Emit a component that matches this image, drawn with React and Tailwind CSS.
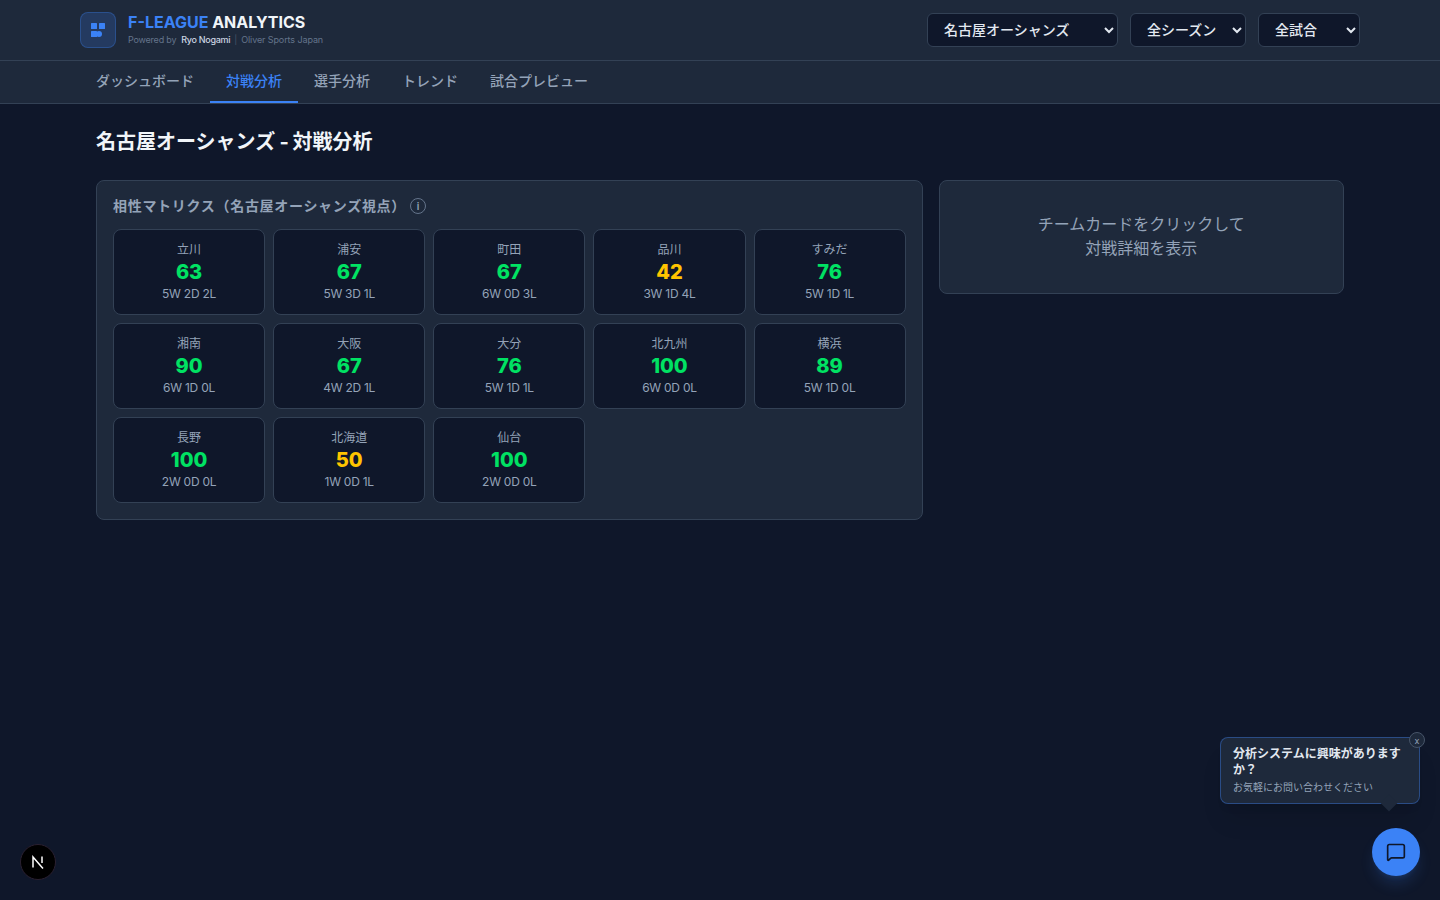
import React from "react";
import { MessageSquare } from "lucide-react";

const FONT = "font-['Inter','Noto_Sans_CJK_JP',sans-serif]";

const tabs = ["ダッシュボード", "対戦分析", "選手分析", "トレンド", "試合プレビュー"];

const matchups = [
  { name: "立川", score: 63, record: "5W 2D 2L" },
  { name: "浦安", score: 67, record: "5W 3D 1L" },
  { name: "町田", score: 67, record: "6W 0D 3L" },
  { name: "品川", score: 42, record: "3W 1D 4L" },
  { name: "すみだ", score: 76, record: "5W 1D 1L" },
  { name: "湘南", score: 90, record: "6W 1D 0L" },
  { name: "大阪", score: 67, record: "4W 2D 1L" },
  { name: "大分", score: 76, record: "5W 1D 1L" },
  { name: "北九州", score: 100, record: "6W 0D 0L" },
  { name: "横浜", score: 89, record: "5W 1D 0L" },
  { name: "長野", score: 100, record: "2W 0D 0L" },
  { name: "北海道", score: 50, record: "1W 0D 1L" },
  { name: "仙台", score: 100, record: "2W 0D 0L" },
];

function FilterSelect({ options }) {
  return (
    <select className="h-[34px] rounded-md border border-[#334155] bg-[#0f172a] px-3 pb-0.5 text-sm font-medium text-[#e2e8f0]">
      {options.map((o) => (
        <option key={o}>{o}</option>
      ))}
    </select>
  );
}

function MatchupCard({ name, score, record }) {
  return (
    <div className="flex h-[86px] flex-col items-center rounded-lg border border-[#334155] bg-[#0f172a] pt-3 text-center">
      <div className="text-xs leading-4 text-[#94a3b8]">{name}</div>
      <div className={`text-xl leading-7 font-extrabold ${score >= 60 ? "text-[#00e263]" : "text-[#ffc400]"}`}>
        {score}
      </div>
      <div className="text-xs leading-4 tracking-[-0.25px] text-[#94a3b8]">{record}</div>
    </div>
  );
}

export default function App() {
  return (
    <div className={`relative min-h-[900px] bg-[#0f172a] ${FONT}`}>
      <header className="h-[61px] border-b border-[#334155] bg-[#1e293b]">
        <div className="mx-auto flex h-[60px] max-w-7xl items-center justify-between">
          <div className="flex items-center gap-3">
            <div className="flex h-9 w-9 items-center justify-center rounded-lg border border-[#3b82f6]/30 bg-[#3b82f6]/20">
              <svg width="14" height="14" viewBox="0 0 14 14" className="fill-[#3b82f6]">
                <rect x="0" y="0" width="6" height="6" rx="0.5" />
                <rect x="8" y="0" width="6" height="6" rx="0.5" />
                <rect x="0" y="8" width="6" height="6" rx="0.5" />
                <circle cx="8" cy="11" r="3" />
              </svg>
            </div>
            <div>
              <div className="text-base leading-5 font-bold">
                <span className="text-[#3b82f6]">F-LEAGUE</span> <span className="text-[#f1f5f9]">ANALYTICS</span>
              </div>
              <div className="flex items-center text-[9px] leading-4 text-[#64748b]">
                <span className="tracking-[-0.2px]">Powered by</span>
                <span className="ml-[5px] font-medium tracking-[-0.3px] text-[#cbd5e1]">Ryo Nogami</span>
                <span className="mx-1 text-[#475569]">|</span>
                <span className="tracking-[-0.1px]">Oliver Sports Japan</span>
              </div>
            </div>
          </div>
          <div className="flex items-center gap-3">
            <FilterSelect options={["名古屋オーシャンズ", "立川アスレティックFC"]} />
            <FilterSelect options={["全シーズン"]} />
            <FilterSelect options={["全試合", "ホーム", "アウェイ"]} />
          </div>
        </div>
      </header>

      <nav className="h-[43px] border-b border-[#334155] bg-[#1e293b]">
        <div className="mx-auto flex max-w-7xl">
          {tabs.map((tab) => (
            <div
              key={tab}
              className={`h-[42px] border-b-2 px-4 text-sm leading-10 font-medium ${
                tab === "対戦分析" ? "border-[#3b82f6] text-[#3b82f6]" : "border-transparent text-[#94a3b8]"
              }`}
            >
              {tab}
            </div>
          ))}
        </div>
      </nav>

      <main className="mx-auto max-w-7xl px-4 py-6">
        <h1 className="mb-6 text-xl leading-7 font-bold text-[#f1f5f9]">
          名古屋オーシャンズ<span className="tracking-[-0.5px]"> - </span>対戦分析
        </h1>
        <div className="grid grid-cols-3 items-start gap-4">
          <section className="col-span-2 rounded-lg border border-[#334155] bg-[#1e293b] p-4">
            <div className="-mt-px mb-[13px] flex items-center gap-1 text-sm leading-5 font-semibold tracking-wider text-[#94a3b8]">
              相性マトリクス（名古屋オーシャンズ視点）
              <span className="flex h-4 w-4 items-center justify-center rounded-full border border-[#64748b] text-[10px] leading-none font-semibold tracking-normal">
                i
              </span>
            </div>
            <div className="grid grid-cols-5 gap-2">
              {matchups.map((m) => (
                <MatchupCard key={m.name} {...m} />
              ))}
            </div>
          </section>
          <aside className="rounded-lg border border-[#334155] bg-[#1e293b] px-6 pt-[31px] pb-[33px] text-center text-base leading-6 text-[#94a3b8]">
            チームカードをクリックして
            <br />
            対戦詳細を表示
          </aside>
        </div>
      </main>

      <div className="absolute bottom-5 left-5 flex h-9 w-9 items-center justify-center rounded-full border border-[#2a2030] bg-black">
        <svg width="14" height="14" viewBox="0 0 14 14" fill="none" stroke="white" strokeWidth="1.5">
          <path d="M2 12.5V2l10 11.5" />
          <path d="M11 1.5V8" />
        </svg>
      </div>

      <div className="absolute right-5 bottom-24 w-[200px] rounded-lg border border-[#3b82f6]/40 bg-[#1e293b] px-3 py-2 shadow-xl">
        <div className="text-xs leading-4 font-semibold text-[#e2e8f0]">分析システムに興味がありますか？</div>
        <div className="mt-px text-[10px] leading-4 text-[#94a3b8]">お気軽にお問い合わせください</div>
        <div className="absolute right-[24px] -bottom-[6px] h-3 w-3 rotate-45 bg-[#1e293b]" />
        <div className="absolute -top-1.5 -right-1.5 flex h-4 w-4 items-center justify-center rounded-full border border-[#475569] bg-[#1e293b] text-[9px] leading-none text-[#94a3b8]">
          x
        </div>
      </div>

      <div className="absolute right-5 bottom-6 flex h-12 w-12 items-center justify-center rounded-full bg-[#3b82f6] shadow-lg shadow-[#3b82f6]/20">
        <MessageSquare size={20} className="text-[#0f172a]" />
      </div>
    </div>
  );
}
